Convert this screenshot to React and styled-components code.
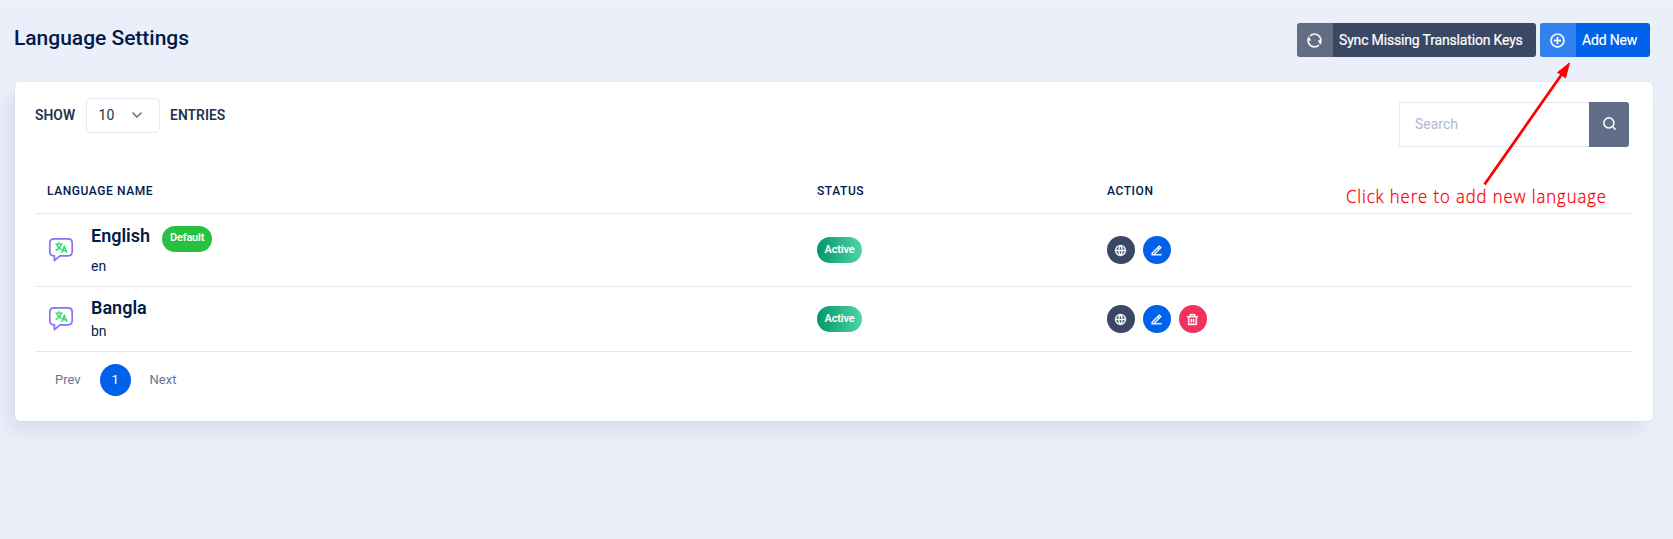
import React from "react";
import styled, { createGlobalStyle, css } from "styled-components";
import {
  RiRefreshLine,
  RiAddCircleLine,
  RiSearchLine,
  RiGlobalLine,
  RiEdit2Line,
  RiDeleteBinLine,
} from "react-icons/ri";

const Global = createGlobalStyle`
  * { box-sizing: border-box; }
  body {
    margin: 0;
    background: #ebeffa;
    font-family: Roboto, "Liberation Sans", sans-serif;
    color: #041f4e;
  }
  button, input { font-family: inherit; }
`;

const Page = styled.div`
  position: relative;
  height: 539px;
  overflow: hidden;
  border-top: 1px solid #f1f1f1;
  padding: 22px 20px 0 15px;
`;

const Header = styled.header`
  display: flex;
  justify-content: space-between;
  align-items: flex-start;
  height: 59px;
  padding-right: 3px;
`;

const Title = styled.h1`
  margin: 0 0 0 -1px;
  font-size: 21px;
  font-weight: 500;
  line-height: 30px;
  letter-spacing: -0.02px;
  color: #001b4b;
`;

const ButtonGroup = styled.div`
  display: flex;
  gap: 4px;
`;

const ActionButton = styled.button`
  display: flex;
  align-items: center;
  width: ${(p) => p.$width}px;
  height: 34px;
  padding: 0;
  border: 0;
  border-radius: 3px;
  overflow: hidden;
  background: ${(p) => p.$bg};
  color: #fff;
  font-size: 14px;
  letter-spacing: -0.17px;
  -webkit-text-stroke: 0.2px currentColor;
  white-space: nowrap;
`;

const ButtonIcon = styled.span`
  display: flex;
  align-items: center;
  justify-content: center;
  flex: none;
  width: 36px;
  height: 34px;
  margin-right: 6px;
  padding-right: 1px;
  background: rgba(255, 255, 255, 0.2);
  svg { stroke: currentColor; stroke-width: 0.4px; }
`;

const Card = styled.main`
  height: 339px;
  padding: 16px 20px 0;
  border-radius: 5px;
  background: #fff;
  box-shadow: 0 0 0 1px rgba(20, 40, 100, 0.03), -8px 12px 18px -2px rgba(8, 21, 66, 0.08);
`;

const Toolbar = styled.div`
  display: flex;
  justify-content: space-between;
  align-items: flex-start;
  height: 73px;
`;

const LengthControl = styled.div`
  display: flex;
  align-items: center;
  gap: 10.5px;
  font-size: 14px;
  font-weight: 500;
  color: #23334d;
  > span {
    padding-bottom: 2px;
    font-size: 13.9px;
    font-weight: 600;
  }
`;

const Select = styled.div`
  display: flex;
  align-items: center;
  justify-content: space-between;
  width: 74px;
  height: 35px;
  padding: 0 16px 1px 12px;
  border: 1px solid #e4eaf7;
  border-radius: 5px;
  font-weight: 400;
  color: #23334d;
`;

const SearchBox = styled.div`
  display: flex;
  width: 230px;
  height: 45px;
  margin: 4px 4px 0 0;
`;

const SearchInput = styled.input`
  flex: 1;
  min-width: 0;
  padding: 0 0 1px 15px;
  border: 1px solid #e4eaf2;
  border-right: 0;
  outline: 0;
  font-size: 14px;
  &::placeholder { color: #b0b8ca; opacity: 1; }
`;

const SearchButton = styled.button`
  display: flex;
  align-items: center;
  justify-content: center;
  width: 40px;
  padding: 0 0 3px 1px;
  border: 0;
  border-radius: 0 3px 3px 0;
  background: #606c88;
  color: #fff;
  svg { stroke: currentColor; stroke-width: 0.5px; }
`;

const rowGrid = css`
  display: grid;
  grid-template-columns: 769px 290px 1fr;
  align-items: center;
  padding-left: 13px;
  border-bottom: 1px solid #e6e8f0;
`;

const HeadRow = styled.div`
  ${rowGrid}
  grid-template-columns: 770px 290px 1fr;
  height: 43px;
  padding-left: 12px;
  padding-bottom: 2px;
  font-size: 12px;
  font-weight: 500;
  letter-spacing: 0.58px;
  color: #001b4b;
`;

const Row = styled.div`
  ${rowGrid}
  height: ${(p) => p.$height}px;
`;

const Language = styled.div`
  display: flex;
  align-items: center;
  gap: 17px;
`;

const Names = styled.div`
  display: flex;
  flex-direction: column;
  gap: ${(p) => p.$gap}px;
  padding: ${(p) => p.$padding};
`;

const NameLine = styled.div`
  display: flex;
  align-items: flex-start;
  gap: 12px;
  font-size: 18px;
  font-weight: 600;
  letter-spacing: 0;
  line-height: 20px;
  color: #001b4b;
`;

const Code = styled.div`
  font-size: 14px;
  line-height: 18px;
  color: #041f4e;
`;

const Badge = styled.span`
  display: flex;
  align-items: center;
  justify-content: center;
  width: ${(p) => p.$width}px;
  height: 26px;
  padding-bottom: 2px;
  border-radius: 13px;
  background: ${(p) => p.$bg};
  color: #fff;
  font-size: 11px;
  font-weight: 600;
  letter-spacing: -0.2px;
`;

const Actions = styled.div`
  display: flex;
  gap: 8px;
`;

const RoundButton = styled.button`
  display: flex;
  align-items: center;
  justify-content: center;
  width: 28px;
  height: 28px;
  padding: 1px 1px 0 0;
  border: 0;
  border-radius: 50%;
  background: ${(p) => p.$bg};
  color: #fff;
  svg { stroke: currentColor; stroke-width: 0.7px; }
`;

const Pagination = styled.nav`
  display: flex;
  align-items: center;
  padding: 12px 0 0 20px;
  gap: 19px;
  font-size: 13px;
  color: #68738f;
  > span { padding-bottom: 1px; }
`;

const PageNumber = styled.span`
  display: flex;
  align-items: center;
  justify-content: center;
  width: 31px;
  height: 32px;
  border-radius: 50%;
  background: #0062ea;
  color: #fff;
`;

const Annotation = styled.div`
  position: absolute;
  left: 1346px;
  top: 182px;
  color: #fb0007;
  font-family: "Open Sans", "Noto Sans", sans-serif;
  font-size: 18.5px;
  font-weight: 300;
  -webkit-text-stroke: 0.3px currentColor;
  line-height: 25px;
  letter-spacing: 1.05px;
  white-space: nowrap;
  transform: scaleX(0.9);
  transform-origin: left;
`;

const Arrow = styled.svg`
  position: absolute;
  left: 1480px;
  top: 59px;
`;

const TranslateIcon = () => (
  <svg width="26" height="26" viewBox="0 0 26 26" fill="none">
    <path
      d="M6 1.8H20C23 1.8 24.2 3.4 24.2 6V14.5C24.2 17.3 22.8 18.8 20 18.8H12L6.4 23.6V18.8H6C3 18.8 1.8 17.2 1.8 14.5V6C1.8 3.3 3.2 1.8 6 1.8Z"
      stroke="#8a70f3"
      strokeWidth="1.7"
      strokeLinejoin="round"
    />
    <path
      d="M7.4 7.1H14.6M11 5.3V7.1M8.8 7.3C9.5 9.8 11.2 11.6 13.6 12.6M13.2 7.3C12.4 10.2 10.5 12.2 7.6 13.5"
      stroke="#2cdd68"
      strokeWidth="1.4"
    />
    <path d="M13.6 15.8L16.3 9.6L19 15.8M14.6 13.8H18" stroke="#2cdd68" strokeWidth="1.5" />
  </svg>
);

const Chevron = () => (
  <svg width="12" height="8" viewBox="0 0 12 8" fill="none">
    <path d="M1.5 1.5L6 6L10.5 1.5" stroke="#717b8c" strokeWidth="1.7" />
  </svg>
);

const languages = [
  { name: "English", code: "en", isDefault: true, height: 73, gap: 5, padding: "1px 0 0" },
  { name: "Bangla", code: "bn", isDefault: false, height: 65, gap: 4, padding: "0 0 1px" },
];

export default function App() {
  return (
    <Page>
      <Global />
      <Header>
        <Title>Language Settings</Title>
        <ButtonGroup>
          <ActionButton $width={239} $bg="#3b4863">
            <ButtonIcon><RiRefreshLine size={17} /></ButtonIcon>
            Sync Missing Translation Keys
          </ActionButton>
          <ActionButton $width={110} $bg="#0062ea">
            <ButtonIcon><RiAddCircleLine size={17} /></ButtonIcon>
            Add New
          </ActionButton>
        </ButtonGroup>
      </Header>
      <Card>
        <Toolbar>
          <LengthControl>
            <span>SHOW</span>
            <Select>10 <Chevron /></Select>
            <span>ENTRIES</span>
          </LengthControl>
          <SearchBox>
            <SearchInput placeholder="Search" />
            <SearchButton><RiSearchLine size={15} /></SearchButton>
          </SearchBox>
        </Toolbar>
        <HeadRow>
          <span>LANGUAGE NAME</span>
          <span>STATUS</span>
          <span>ACTION</span>
        </HeadRow>
        {languages.map((l) => (
          <Row key={l.code} $height={l.height}>
            <Language>
              <TranslateIcon />
              <Names $gap={l.gap} $padding={l.padding}>
                <NameLine>
                  {l.name}
                  {l.isDefault && <Badge $width={50} $bg="#28c13f">Default</Badge>}
                </NameLine>
                <Code>{l.code}</Code>
              </Names>
            </Language>
            <Badge $width={45} $bg="linear-gradient(90deg, #059669, #4cd6a9)">Active</Badge>
            <Actions>
              <RoundButton $bg="#3b4863"><RiGlobalLine size={13} /></RoundButton>
              <RoundButton $bg="#0062ea"><RiEdit2Line size={13} /></RoundButton>
              {!l.isDefault && (
                <RoundButton $bg="#f1325f"><RiDeleteBinLine size={13} /></RoundButton>
              )}
            </Actions>
          </Row>
        ))}
        <Pagination>
          <span>Prev</span>
          <PageNumber>1</PageNumber>
          <span>Next</span>
        </Pagination>
      </Card>
      <Arrow width="96" height="128" viewBox="0 0 96 128">
        <path d="M4.5 124.5L82 14" stroke="#fe0000" strokeWidth="2.8" />
        <path d="M89.5 3L77.5 12.5L81.5 14.5L85.5 18Z" fill="#fe0000" stroke="#fe0000" />
      </Arrow>
      <Annotation>Click here to add new language</Annotation>
    </Page>
  );
}
